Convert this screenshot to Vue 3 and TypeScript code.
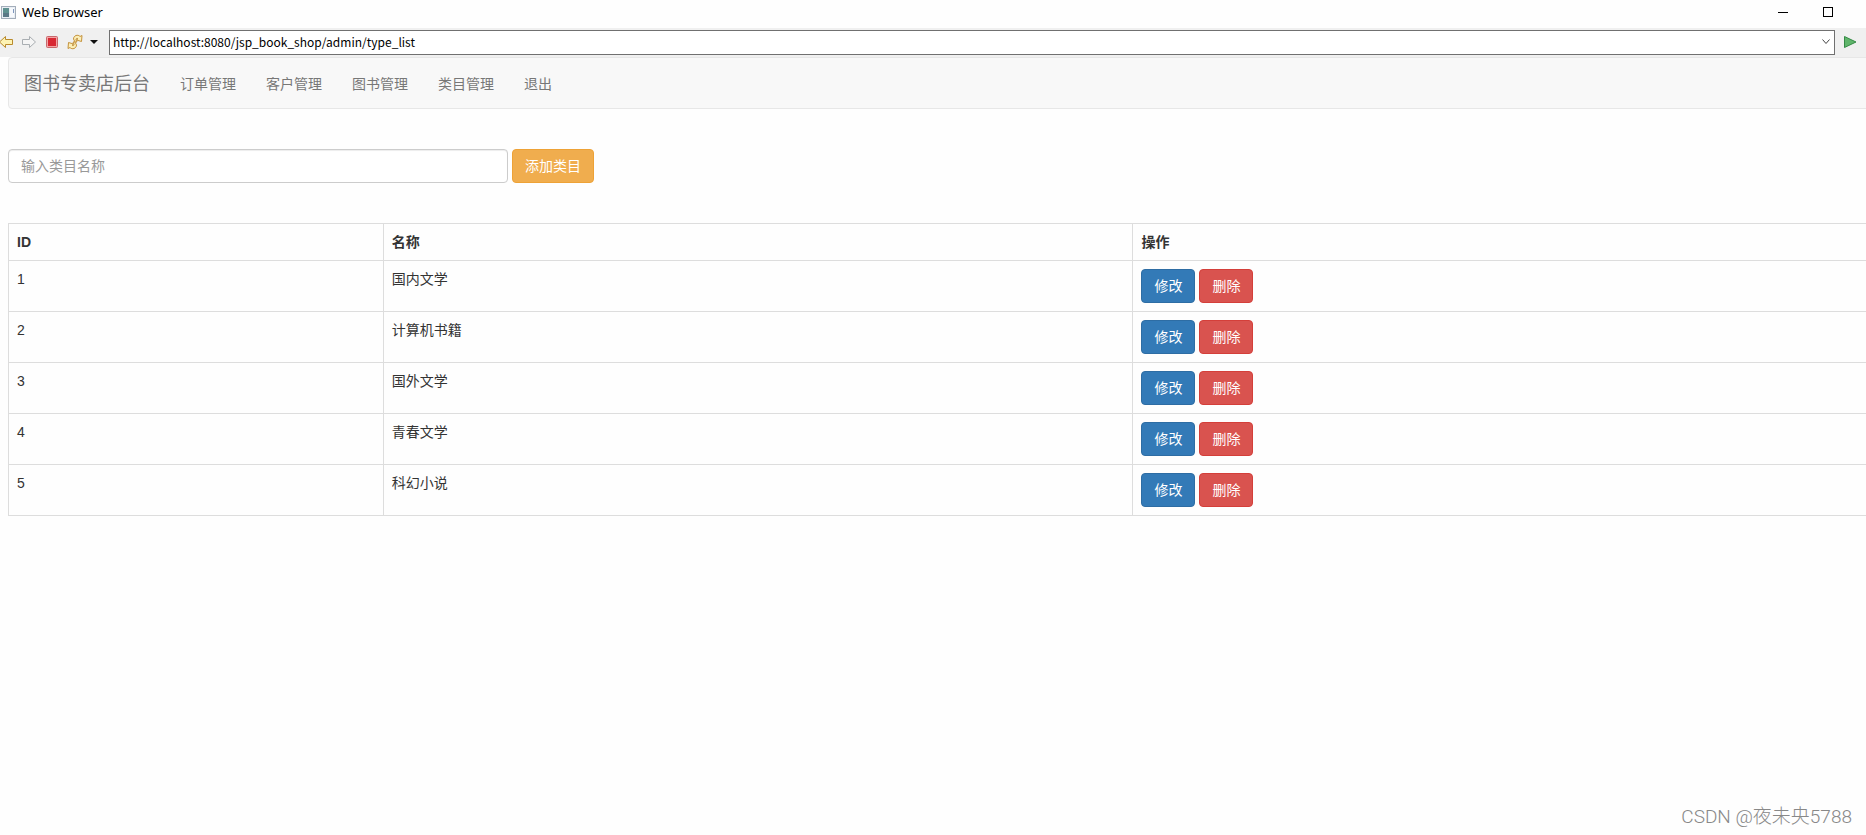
<script setup lang="ts">
import { ref } from 'vue'

interface Category {
  id: number
  name: string
}

const address = ref('http://localhost:8080/jsp_book_shop/admin/type_list')
const newName = ref('')
const links: string[] = ['订单管理', '客户管理', '图书管理', '类目管理', '退出']
const categories = ref<Category[]>([
  { id: 1, name: '国内文学' },
  { id: 2, name: '计算机书籍' },
  { id: 3, name: '国外文学' },
  { id: 4, name: '青春文学' },
  { id: 5, name: '科幻小说' },
])

function addCategory(): void {
  const name = newName.value.trim()
  if (!name) return
  const id = Math.max(0, ...categories.value.map((c) => c.id)) + 1
  categories.value.push({ id, name })
  newName.value = ''
}

function removeCategory(id: number): void {
  categories.value = categories.value.filter((c) => c.id !== id)
}
</script>

<template>
  <div class="window">
    <header class="titlebar">
      <svg class="app-icon" width="15" height="13" viewBox="0 0 15 13" aria-hidden="true">
        <rect x="0.5" y="0.5" width="14" height="12" fill="#e9eef4" stroke="#a3adba" />
        <rect x="2" y="2" width="6" height="9" fill="#5f9190" />
        <rect x="2" y="7" width="6" height="4" fill="#5a7886" />
        <rect x="9" y="2" width="4" height="9" fill="#f7f9fc" />
        <rect x="12" y="3" width="1" height="4" fill="#7f97bd" />
      </svg>
      <span class="title">Web Browser</span>
      <div class="window-controls">
        <button type="button" aria-label="Minimize">
          <svg width="10" height="10" viewBox="0 0 10 10"><path d="M0 5.5H10" stroke="#000" /></svg>
        </button>
        <button type="button" aria-label="Maximize">
          <svg width="10" height="10" viewBox="0 0 10 10"><rect x="0.5" y="0.5" width="9" height="9" fill="none" stroke="#000" /></svg>
        </button>
      </div>
    </header>

    <div class="toolbar">
      <div class="tools">
        <button type="button" aria-label="Back">
          <svg width="16" height="16" viewBox="0 0 16 16"><path d="M1.500 8 7.500 2.500V5.500H14.500V10.500H7.500V13.500Z" fill="#fdf3b4" stroke="#b98a2c" stroke-linejoin="round" /></svg>
        </button>
        <button type="button" aria-label="Forward">
          <svg width="16" height="16" viewBox="0 0 16 16"><path d="M14.500 8 8.500 2.500V5.500H1.500V10.500H8.500V13.500Z" fill="#f5f5f5" stroke="#a9aeb2" stroke-linejoin="round" /></svg>
        </button>
        <button type="button" aria-label="Stop">
          <svg width="16" height="16" viewBox="0 0 16 16"><rect x="2.500" y="2.500" width="11" height="11" rx="1" fill="#f2a5a5" stroke="#c8686c" /><rect x="4" y="4" width="8" height="8" fill="#d82833" /></svg>
        </button>
        <button type="button" aria-label="Refresh">
          <svg width="16" height="16" viewBox="0 0 16 16">
            <path d="M6.500 5 C6.500 1.500 11 0 13 2.500 L15 1.500 14.500 7.500 9.500 6 11 4.800 C10 3.800 8.800 4.300 9 6 L10 8 8 8 Z" fill="#fcefb8" stroke="#c4923c" stroke-linejoin="round" />
            <path d="M9.500 11 C9.500 14.500 5 16 3 13.500 L1 14.500 1.500 8.500 6.500 10 5 11.200 C6 12.200 7.200 11.700 7 10 L6 8 8 8 Z" fill="#fcefb8" stroke="#c4923c" stroke-linejoin="round" />
          </svg>
        </button>
        <button type="button" class="caret" aria-label="Refresh options">
          <svg width="8" height="4" viewBox="0 0 8 4"><path d="M0 0H8L4 4Z" fill="#111" /></svg>
        </button>
      </div>
      <form class="address" @submit.prevent>
        <div class="address-box">
          <input v-model="address" type="text" aria-label="Address" />
          <button type="button" aria-label="Show history">
            <svg width="8" height="6" viewBox="0 0 8 6"><path d="M0.500 0.500 4 4.500 7.500 0.500" fill="none" stroke="#444" /></svg>
          </button>
        </div>
        <button type="submit" class="go" aria-label="Go">
          <svg width="13" height="12" viewBox="0 0 13 12"><path d="M0.500 0.500V11.500L12 6Z" fill="#60b56b" stroke="#358a45" stroke-linejoin="round" /></svg>
        </button>
      </form>
    </div>

    <main class="page">
      <nav class="navbar">
        <a class="brand" href="#">图书专卖店后台</a>
        <ul>
          <li v-for="link in links" :key="link"><a href="#">{{ link }}</a></li>
        </ul>
      </nav>

      <form class="add-form" @submit.prevent="addCategory">
        <input v-model="newName" type="text" placeholder="输入类目名称" aria-label="输入类目名称" />
        <button type="submit" class="btn btn-warning">添加类目</button>
      </form>

      <table>
        <thead>
          <tr>
            <th class="col-id" scope="col">ID</th>
            <th class="col-name" scope="col">名称</th>
            <th class="col-action" scope="col">操作</th>
          </tr>
        </thead>
        <tbody>
          <tr v-for="category in categories" :key="category.id">
            <td>{{ category.id }}</td>
            <td>{{ category.name }}</td>
            <td>
              <div class="actions">
                <button type="button" class="btn btn-primary">修改</button>
                <button type="button" class="btn btn-danger" @click="removeCategory(category.id)">删除</button>
              </div>
            </td>
          </tr>
        </tbody>
      </table>
    </main>

    <div class="watermark">CSDN @夜未央5788</div>
  </div>
</template>

<style>
body {
  margin: 0;
  background: #fefefe;
}
</style>

<style scoped>
.window,
.window * {
  box-sizing: border-box;
}

.window {
  position: relative;
  min-height: 100vh;
  overflow: hidden;
  color: #333;
  font: 14px/20px "Liberation Sans", "Noto Sans CJK SC", sans-serif;
}

button,
input {
  margin: 0;
  font: inherit;
}

svg {
  display: block;
  flex: none;
}

.titlebar {
  display: flex;
  align-items: center;
  height: 28px;
  padding: 0 24px 4px 1px;
  color: #000;
  font: 13px/20px "Noto Sans", sans-serif;
}

.title {
  flex: 1;
  margin-left: 6px;
}

.window-controls {
  display: flex;
  gap: 16px;
}

.window-controls button,
.tools button,
.address button {
  display: flex;
  align-items: center;
  justify-content: center;
  padding: 0;
  border: 0;
  background: none;
}

.window-controls button {
  width: 29px;
  height: 24px;
}

.toolbar {
  display: flex;
  align-items: center;
  height: 29px;
  padding-bottom: 1px;
  background: #f0f0f0;
}

.tools {
  display: flex;
  align-items: center;
  gap: 7px;
  width: 111px;
  margin-left: -2px;
}

.address {
  display: flex;
  flex: 1;
  align-items: center;
}

.address-box {
  display: flex;
  flex: 1;
  height: 25px;
  border: 1px solid #707070;
  background: #fff;
}

.address-box input {
  flex: 1;
  min-width: 0;
  padding: 0 3px;
  border: 0;
  outline: 0;
  background: none;
  color: #000;
  font: 12px/20px "Noto Sans CJK SC", sans-serif;
}

.address-box button {
  width: 17px;
}

.address .go {
  width: 31px;
  height: 25px;
}

.page {
  margin: 0 -17px 0 8px;
}

.navbar {
  display: flex;
  margin-bottom: 40px;
  border: 1px solid #e7e7e7;
  border-radius: 4px;
  background: #f8f8f8;
}

.navbar a {
  display: block;
  padding: 16px 15px 14px;
  color: #777;
  text-decoration: none;
}

.navbar .brand {
  font-size: 18px;
}

.navbar ul {
  display: flex;
  margin: 0;
  padding: 0;
  list-style: none;
}

.add-form {
  display: flex;
  gap: 4px;
  margin-bottom: 40px;
}

.add-form input {
  width: 500px;
  height: 34px;
  padding: 6px 12px;
  border: 1px solid #ccc;
  border-radius: 4px;
  background: #fff;
  box-shadow: inset 0 1px 1px rgba(0, 0, 0, 0.075);
  color: #555;
}

.add-form input::placeholder {
  color: #999;
  opacity: 1;
}

.btn {
  height: 34px;
  padding: 6px 12px;
  border: 1px solid transparent;
  border-radius: 4px;
  color: #fff;
}

.btn-warning {
  border-color: #eea236;
  background: #f0ad4e;
}

.btn-primary {
  border-color: #2e6da4;
  background: #337ab7;
}

.btn-danger {
  border-color: #d43f3a;
  background: #d9534f;
}

table {
  width: 100%;
  border-collapse: collapse;
  table-layout: fixed;
}

th,
td {
  padding: 8px;
  border: 1px solid #ddd;
  text-align: left;
  vertical-align: top;
}

.col-id {
  width: 20%;
}

.col-name,
.col-action {
  width: 40%;
}

.actions {
  display: flex;
  gap: 4px;
}

.watermark {
  position: absolute;
  right: 14px;
  bottom: 6px;
  color: #888;
  font: 300 19px/24px Roboto, "Noto Sans CJK SC", sans-serif;
}
</style>
